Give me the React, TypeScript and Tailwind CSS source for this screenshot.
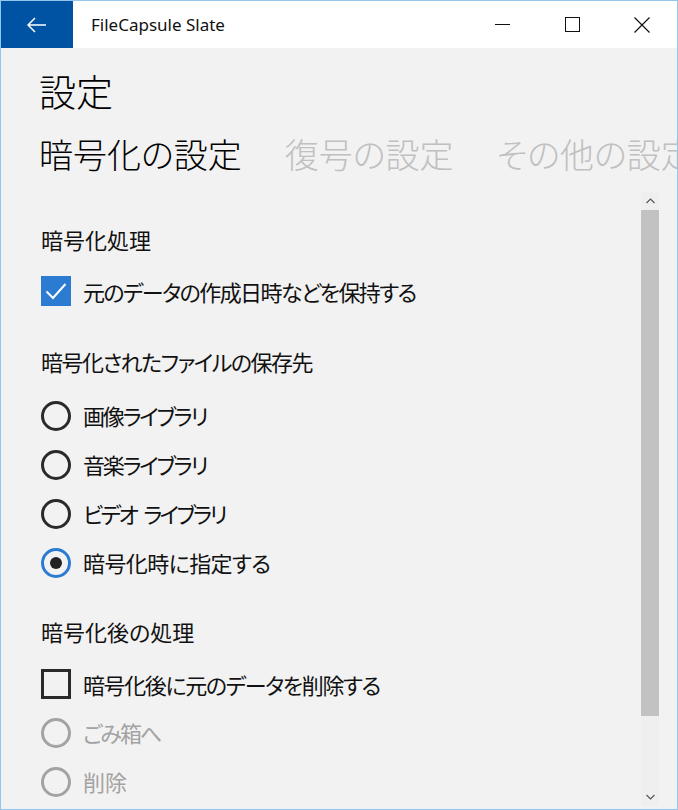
import React from 'react';

const jp = "font-['Noto_Sans_CJK_JP','Noto_Sans',sans-serif] [font-feature-settings:'palt']";

const Heading = ({ children, className = '' }: { children: React.ReactNode; className?: string }) => (
  <div className={`h-[48px] flex items-center text-[22px] text-[#111] ${className}`}>{children}</div>
);

const CheckRow = ({ checked, label, className = '', tracking = '' }: { checked?: boolean; label: string; className?: string; tracking?: string }) => (
  <div className={`h-[48px] flex items-center ${className}`}>
    {checked ? (
      <div className="w-[30px] h-[30px] bg-[#2b7bd3] flex items-center justify-center">
        <svg width="22" height="18" viewBox="0 0 22 18" fill="none">
          <path d="M1.5 9.5 L8 16 L20.5 2" stroke="white" strokeWidth="2" />
        </svg>
      </div>
    ) : (
      <div className="w-[30px] h-[30px] border-[3px] border-[#2a2a2a]" />
    )}
    <span className={`ml-[12px] text-[22px] text-[#111] whitespace-nowrap ${tracking}`}>{label}</span>
  </div>
);

const RadioRow = ({ selected, disabled, label, className = '', tracking = '' }: { selected?: boolean; disabled?: boolean; label: React.ReactNode; className?: string; tracking?: string }) => (
  <div className={`h-[49px] flex items-center ${className}`}>
    <div
      className={`w-[30px] h-[30px] rounded-full border-[3px] flex items-center justify-center ${
        selected ? 'border-[#2b7bd3]' : disabled ? 'border-[#a3a3a3]' : 'border-[#2a2a2a]'
      }`}
    >
      {selected && <div className="w-[12px] h-[12px] rounded-full bg-[#222]" />}
    </div>
    <span className={`ml-[12px] text-[22px] whitespace-nowrap ${tracking} ${disabled ? 'text-[#a3a3a3]' : 'text-[#111]'}`}>{label}</span>
  </div>
);

export default function App() {
  return (
    <div className={`w-[678px] h-[810px] border border-[#93c6ef] bg-[#f2f2f2] flex flex-col overflow-hidden ${jp}`}>
      {/* Title bar */}
      <div className="h-[47px] bg-white flex items-center shrink-0">
        <div className="w-[72px] h-full bg-[#0052a2] flex items-center justify-center">
          <svg width="20" height="16" viewBox="0 0 20 16" fill="none">
            <path d="M1 8 H19 M8 1 L1 8 L8 15" stroke="white" strokeWidth="1.5" />
          </svg>
        </div>
        <span className="ml-[18px] text-[17px] text-[#111] font-['Noto_Sans',sans-serif]">FileCapsule Slate</span>
        <div className="flex-1" />
        <div className="w-[70px] h-full flex items-center justify-center">
          <div className="w-[15px] h-px bg-[#111]" />
        </div>
        <div className="w-[70px] h-full flex items-center justify-center">
          <div className="w-[15px] h-[15px] border border-[#111]" />
        </div>
        <div className="w-[70px] h-full flex items-center justify-center">
          <svg width="16" height="16" viewBox="0 0 16 16" fill="none">
            <path d="M0.5 0.5 L15.5 15.5 M15.5 0.5 L0.5 15.5" stroke="#111" strokeWidth="1.2" />
          </svg>
        </div>
      </div>

      {/* Content */}
      <div className="flex-1 flex flex-col pl-[38px] min-h-0">
        <h1 className="mt-[25px] text-[37px] leading-none text-black font-light">設定</h1>
        <div className="mt-[27px] flex gap-[43px] text-[34px] leading-none whitespace-nowrap font-light">
          <span className="text-black">暗号化の設定</span>
          <span className="text-[#c0c0c0]">復号の設定</span>
          <span className="text-[#c0c0c0]">その他の設定</span>
        </div>

        <div className="mt-[21px] flex-1 flex min-h-0">
          <div className="flex-1 flex flex-col pt-[23px] pl-[2px]">
            <Heading>暗号化処理</Heading>
            <CheckRow checked label="元のデータの作成日時などを保持する" tracking="tracking-[-1.6px]" className="mt-[4px]" />
            <Heading className="mt-[22px] tracking-[-1.5px]">暗号化されたファイルの保存先</Heading>
            <RadioRow label="画像ライブラリ" tracking="tracking-[-2.2px]" className="mt-[6px]" />
            <RadioRow label="音楽ライブラリ" tracking="tracking-[-2.2px]" />
            <RadioRow label={<>ビデオ<span className="ml-[7px]">ライブラリ</span></>} tracking="tracking-[-2.6px]" />
            <RadioRow selected label="暗号化時に指定する" tracking="tracking-[-0.6px]" />
            <Heading className="mt-[20px]">暗号化後の処理</Heading>
            <CheckRow label="暗号化後に元のデータを削除する" tracking="tracking-[-1.4px]" className="mt-[5px]" />
            <RadioRow disabled label="ごみ箱へ" tracking="tracking-[-2px]" />
            <RadioRow disabled label="削除" />
          </div>

          {/* Scrollbar */}
          <div className="w-[18px] mr-[18px] mb-[3px] flex flex-col bg-[#efefef]">
            <div className="h-[18px] flex items-center justify-center">
              <svg width="9" height="6" viewBox="0 0 9 6" fill="none">
                <path d="M0.5 5 L4.5 1 L8.5 5" stroke="#555" strokeWidth="1.2" />
              </svg>
            </div>
            <div className="h-[506px] bg-[#c2c2c2]" />
            <div className="flex-1" />
            <div className="h-[18px] flex items-center justify-center">
              <svg width="9" height="6" viewBox="0 0 9 6" fill="none">
                <path d="M0.5 1 L4.5 5 L8.5 1" stroke="#555" strokeWidth="1.2" />
              </svg>
            </div>
          </div>
        </div>
      </div>
    </div>
  );
}
